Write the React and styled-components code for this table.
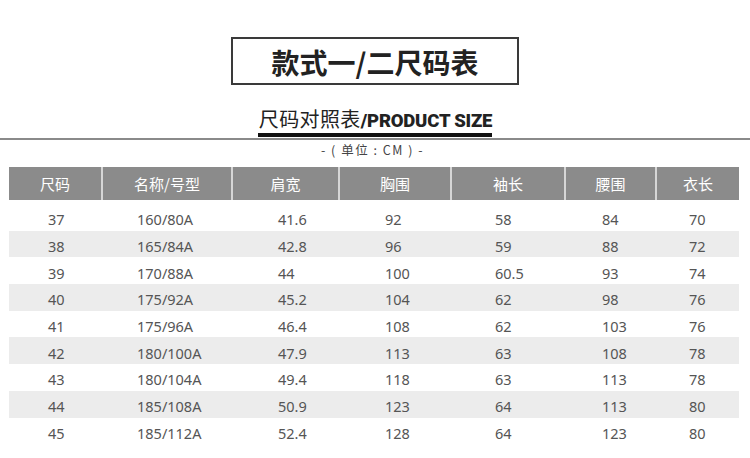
import React from "react";
import styled, { createGlobalStyle } from "styled-components";

const GlobalStyle = createGlobalStyle`
  html, body {
    margin: 0;
    padding: 0;
    background: #ffffff;
  }
  body {
    font-family: "Noto Sans", "Noto Sans CJK SC", sans-serif;
  }
`;

const columns = [
  { title: "尺码", width: 92, pad: 39 },
  { title: "名称/号型", width: 130, pad: 36 },
  { title: "肩宽", width: 107, pad: 47 },
  { title: "胸围", width: 112, pad: 47 },
  { title: "袖长", width: 114, pad: 45 },
  { title: "腰围", width: 91, pad: 38 },
  { title: "衣长", width: 84, pad: 34 },
];

const rows = [
  ["37", "160/80A", "41.6", "92", "58", "84", "70"],
  ["38", "165/84A", "42.8", "96", "59", "88", "72"],
  ["39", "170/88A", "44", "100", "60.5", "93", "74"],
  ["40", "175/92A", "45.2", "104", "62", "98", "76"],
  ["41", "175/96A", "46.4", "108", "62", "103", "76"],
  ["42", "180/100A", "47.9", "113", "63", "108", "78"],
  ["43", "180/104A", "49.4", "118", "63", "113", "78"],
  ["44", "185/108A", "50.9", "123", "64", "113", "80"],
  ["45", "185/112A", "52.4", "128", "64", "123", "80"],
];

const gridTemplate = columns.map((c) => `${c.width}px`).join(" ");

const Page = styled.div`
  width: 750px;
  height: 458px;
  padding-top: 37px;
  box-sizing: border-box;
  overflow: hidden;
`;

const TitleBox = styled.div`
  width: 288px;
  height: 48px;
  margin: 0 auto;
  box-sizing: border-box;
  border: 2px solid #3a3a3a;
  display: flex;
  align-items: center;
  justify-content: center;
  font-family: "Noto Sans CJK SC", sans-serif;
  font-weight: 700;
  font-size: 28px;
  color: #222;
  padding-top: 2px;
`;

const SubtitleWrap = styled.div`
  margin-top: 23px;
  display: flex;
  justify-content: center;
`;

const Subtitle = styled.div`
  display: inline-flex;
  align-items: baseline;
  height: 23px;
  line-height: 22px;
  padding: 0 0 2px 1px;
  border-bottom: 4px solid #111;
  color: #222;
`;

const SubCn = styled.span`
  font-family: "Noto Sans CJK SC", sans-serif;
  font-size: 20px;
  font-weight: 400;
  letter-spacing: 0.4px;
`;

const SubEn = styled.span`
  font-family: Roboto, "Liberation Sans", sans-serif;
  font-size: 18.5px;
  font-weight: 900;
  letter-spacing: -0.2px;
`;

const Rule = styled.div`
  margin-top: 1px;
  height: 2px;
  background: #8a8a8a;
`;

const Unit = styled.div`
  margin-top: 2px;
  height: 16px;
  line-height: 16px;
  text-align: center;
  font-family: "Noto Sans CJK SC", sans-serif;
  font-size: 12.5px;
  color: #444;
  letter-spacing: 1.5px;
  padding-right: 5px;
`;

const Table = styled.div`
  margin: 9px 0 0 9px;
  width: 730px;
`;

const HeaderRow = styled.div`
  display: grid;
  grid-template-columns: ${gridTemplate};
  height: 33px;
  background: #8b8b8b;
`;

const HeaderCell = styled.div`
  display: flex;
  align-items: center;
  justify-content: center;
  font-family: "Noto Sans CJK SC", sans-serif;
  font-size: 15px;
  color: #ffffff;
  padding-bottom: 1px;
  border-left: ${({ $first }) => ($first ? "none" : "2px solid #d6d6d6")};
`;

const Body = styled.div`
  margin-top: 4px;
`;

const Row = styled.div`
  display: grid;
  grid-template-columns: ${gridTemplate};
  height: 26.7px;
  align-items: center;
  background: ${({ $striped }) => ($striped ? "#ececec" : "transparent")};
`;

const Cell = styled.div`
  padding-left: ${({ $pad }) => $pad}px;
  padding-top: 4px;
  font-family: "Noto Sans", sans-serif;
  font-size: 14.5px;
  color: #555;
  white-space: nowrap;
`;

export default function App() {
  return (
    <>
      <GlobalStyle />
      <Page>
        <TitleBox>款式一/二尺码表</TitleBox>
        <SubtitleWrap>
          <Subtitle>
            <SubCn>尺码对照表</SubCn>
            <SubEn>/PRODUCT SIZE</SubEn>
          </Subtitle>
        </SubtitleWrap>
        <Rule />
        <Unit>- ( 单位 : CM ) -</Unit>
        <Table>
          <HeaderRow>
            {columns.map((c, i) => (
              <HeaderCell key={c.title} $first={i === 0}>
                {c.title}
              </HeaderCell>
            ))}
          </HeaderRow>
          <Body>
            {rows.map((r, ri) => (
              <Row key={r[0]} $striped={ri % 2 === 1}>
                {r.map((v, ci) => (
                  <Cell key={ci} $pad={columns[ci].pad}>
                    {v}
                  </Cell>
                ))}
              </Row>
            ))}
          </Body>
        </Table>
      </Page>
    </>
  );
}
